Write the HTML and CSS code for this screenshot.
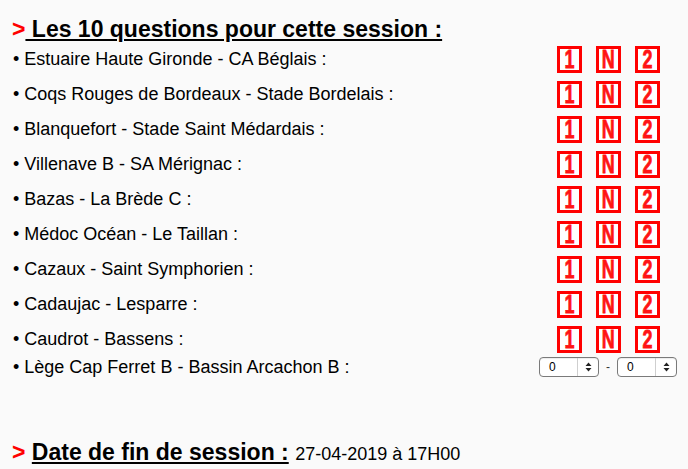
FILE: index.html
```html
<!DOCTYPE html>
<html lang="fr">
<head>
<meta charset="utf-8">
<link rel="stylesheet" href="styles.css">
</head>
<body>
<div class="page">
  <h2 class="title"><span class="arrow">&gt;</span><span class="ul"> Les 10 questions pour cette session :</span></h2>
  <div class="questions">
    <div class="row"><span class="label">• Estuaire Haute Gironde - CA Béglais :</span><span class="choices"><span class="pick"><span class="g">1</span></span><span class="pick"><span class="g">N</span></span><span class="pick"><span class="g">2</span></span></span></div>
    <div class="row"><span class="label">• Coqs Rouges de Bordeaux - Stade Bordelais :</span><span class="choices"><span class="pick"><span class="g">1</span></span><span class="pick"><span class="g">N</span></span><span class="pick"><span class="g">2</span></span></span></div>
    <div class="row"><span class="label">• Blanquefort - Stade Saint Médardais :</span><span class="choices"><span class="pick"><span class="g">1</span></span><span class="pick"><span class="g">N</span></span><span class="pick"><span class="g">2</span></span></span></div>
    <div class="row"><span class="label">• Villenave B - SA Mérignac :</span><span class="choices"><span class="pick"><span class="g">1</span></span><span class="pick"><span class="g">N</span></span><span class="pick"><span class="g">2</span></span></span></div>
    <div class="row"><span class="label">• Bazas - La Brède C :</span><span class="choices"><span class="pick"><span class="g">1</span></span><span class="pick"><span class="g">N</span></span><span class="pick"><span class="g">2</span></span></span></div>
    <div class="row"><span class="label">• Médoc Océan - Le Taillan :</span><span class="choices"><span class="pick"><span class="g">1</span></span><span class="pick"><span class="g">N</span></span><span class="pick"><span class="g">2</span></span></span></div>
    <div class="row"><span class="label">• Cazaux - Saint Symphorien :</span><span class="choices"><span class="pick"><span class="g">1</span></span><span class="pick"><span class="g">N</span></span><span class="pick"><span class="g">2</span></span></span></div>
    <div class="row"><span class="label">• Cadaujac - Lesparre :</span><span class="choices"><span class="pick"><span class="g">1</span></span><span class="pick"><span class="g">N</span></span><span class="pick"><span class="g">2</span></span></span></div>
    <div class="row"><span class="label">• Caudrot - Bassens :</span><span class="choices"><span class="pick"><span class="g">1</span></span><span class="pick"><span class="g">N</span></span><span class="pick"><span class="g">2</span></span></span></div>
    <div class="row score-row"><span class="label">• Lège Cap Ferret B - Bassin Arcachon B :</span><span class="choices score"><span class="select"><span class="val">0</span><span class="spin"><svg width="7" height="10" viewBox="0 0 7 10"><path d="M3.5 0.5 L6.5 4 L0.5 4 Z M3.5 9.5 L6.5 6 L0.5 6 Z" fill="#222"/></svg></span></span><span class="dash">-</span><span class="select"><span class="val">0</span><span class="spin"><svg width="7" height="10" viewBox="0 0 7 10"><path d="M3.5 0.5 L6.5 4 L0.5 4 Z M3.5 9.5 L6.5 6 L0.5 6 Z" fill="#222"/></svg></span></span></span></div>
  </div>
  <h2 class="title end"><span class="arrow">&gt;</span> <span class="ul">Date de fin de session :</span> <span class="date">27-04-2019 à 17H00</span></h2>
</div>
</body>
</html>
```
FILE: styles.css
```css
html, body {
  margin: 0;
  padding: 0;
  background: #fafafa;
}
body {
  font-family: "Liberation Sans", Arial, Helvetica, sans-serif;
  color: #000;
}
.page {
  padding: 16px 10px 0 12px;
}
.title {
  margin: 0;
  font-size: 23px;
  font-weight: bold;
  line-height: 26px;
}
.arrow {
  color: #ff0000;
}
.ul {
  text-decoration: underline;
  text-decoration-thickness: 2px;
  text-underline-offset: 2px;
}
.row {
  display: flex;
  align-items: center;
  height: 35px;
}
.label {
  flex: 1;
  font-size: 18px;
  padding-left: 1px;
}
.choices {
  width: 140px;
  display: flex;
  justify-content: center;
  gap: 14px;
}
.pick {
  box-sizing: border-box;
  width: 25px;
  height: 27px;
  border: 3px solid #ff0000;
  background: #fff;
  display: flex;
  align-items: center;
  justify-content: center;
}
.g {
  display: block;
  color: #ff1414;
  font-weight: bold;
  font-size: 23px;
  line-height: 1;
  transform: scaleX(0.78) scaleY(1.1);
  -webkit-text-stroke: 0.7px #ff1414;
}
.score-row {
  height: 20px;
}
.score {
  gap: 0;
  align-items: center;
}
.select {
  box-sizing: border-box;
  width: 60px;
  height: 20px;
  border: 1px solid #7a7a7a;
  border-radius: 4px;
  background: #fff;
  display: flex;
  align-items: stretch;
  font-size: 12px;
  box-shadow: inset 0 1px 1px rgba(0,0,0,0.08);
}
.val {
  flex: 1;
  padding-left: 9px;
  line-height: 18px;
}
.spin {
  width: 20px;
  border-left: 1px solid #cfcfcf;
  display: flex;
  align-items: center;
  justify-content: center;
}
.dash {
  font-size: 12px;
  width: 18px;
  text-align: center;
  color: #333;
}
.end {
  margin-top: 62px;
}
.date {
  font-size: 18px;
  font-weight: normal;
}
```
